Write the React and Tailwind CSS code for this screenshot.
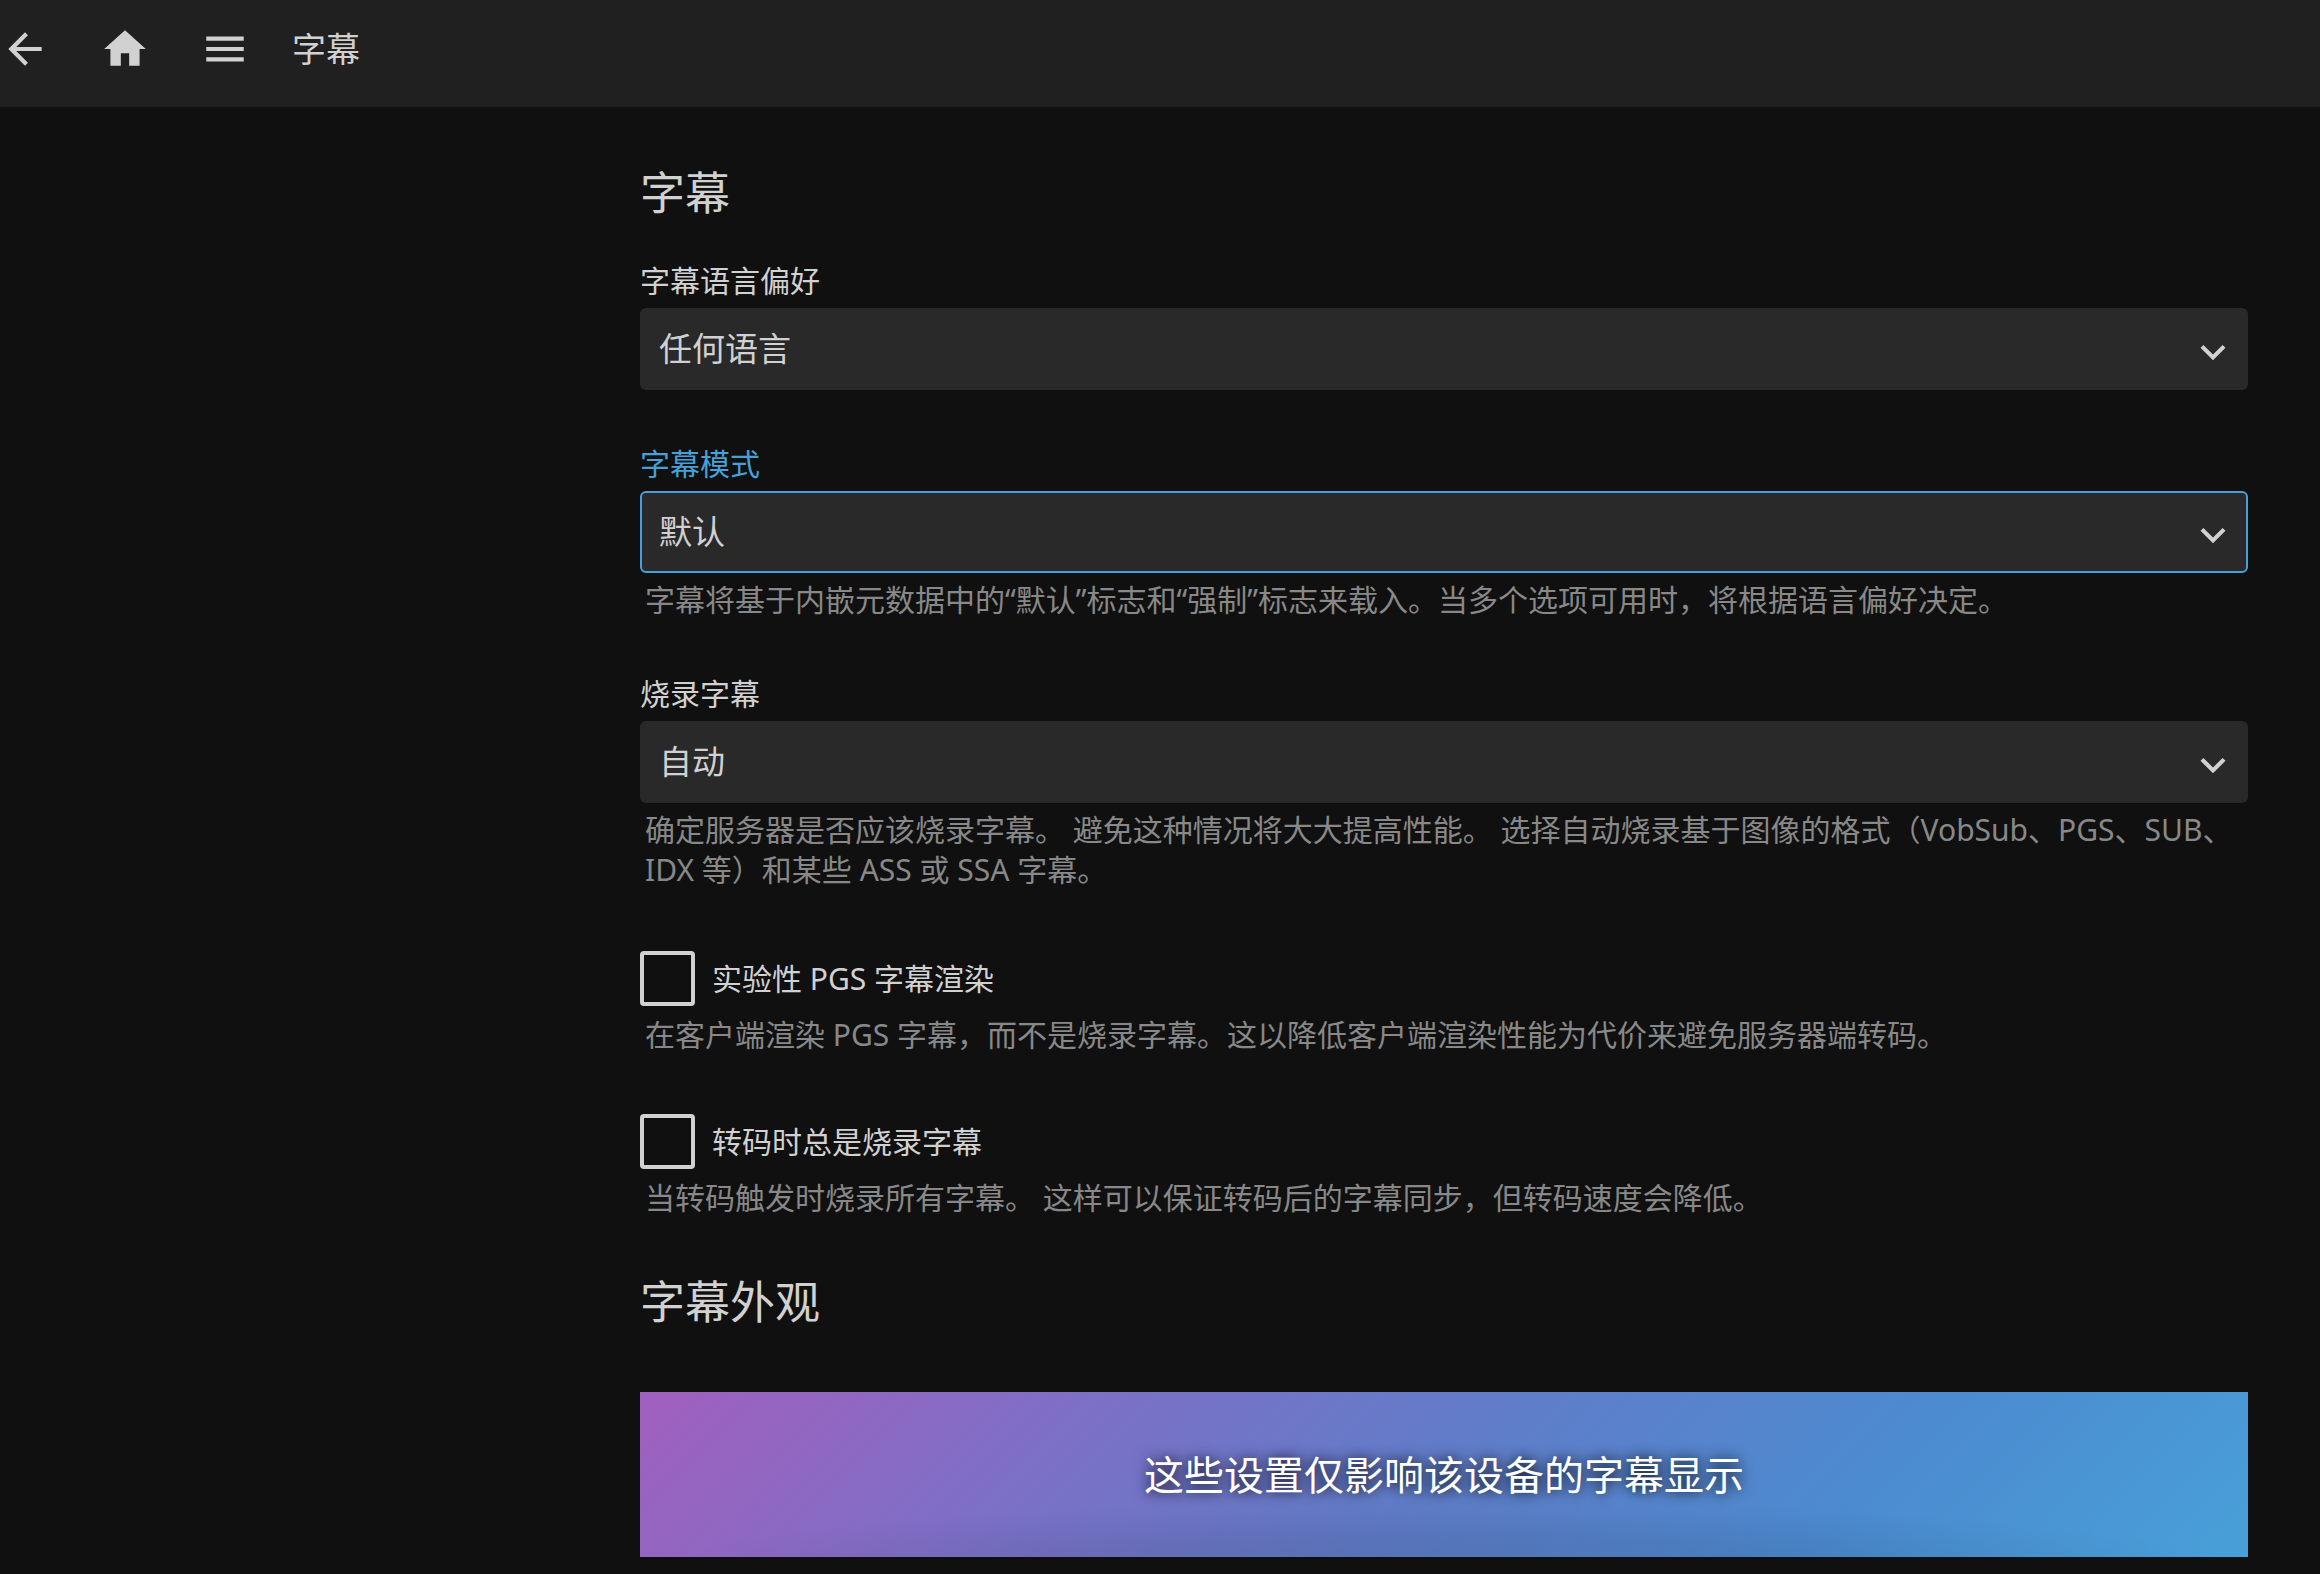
import { MdArrowBack, MdExpandMore, MdHome, MdMenu } from 'react-icons/md';

function IconButton({ label, children }) {
  return (
    <button type="button" aria-label={label} className="flex size-[50px] items-center justify-center text-[50px]">
      {children}
    </button>
  );
}

function SectionTitle({ children }) {
  return <h2 className="text-[45px] leading-[64px]">{children}</h2>;
}

function Description({ id, children }) {
  return (
    <p id={id} className="px-[5px] text-[30px] leading-[40px] text-[#888888]">
      {children}
    </p>
  );
}

function SelectField({ id, label, value, focused, description }) {
  return (
    <div className="mb-[54px]">
      <label htmlFor={id} className={`mb-[7px] block text-[30px] leading-[40px] ${focused ? 'text-[#46a0d9]' : ''}`}>
        {label}
      </label>
      <div className="relative">
        <select
          id={id}
          aria-describedby={description ? `${id}-desc` : undefined}
          className={`block h-[82px] w-full appearance-none rounded-[6px] border-2 bg-[#292929] pr-[70px] pl-[17px] text-[33px] outline-none ${focused ? 'border-[#46a0d9]' : 'border-[#292929]'}`}
        >
          <option>{value}</option>
        </select>
        <MdExpandMore className="pointer-events-none absolute top-[19px] right-[10px] text-[50px]" />
      </div>
      {description && (
        <div className="mt-[7px]">
          <Description id={`${id}-desc`}>{description}</Description>
        </div>
      )}
    </div>
  );
}

function CheckboxField({ id, label, description }) {
  return (
    <div className="mb-[59px]">
      <div className="mb-[9px] flex items-center">
        <input
          id={id}
          type="checkbox"
          aria-describedby={`${id}-desc`}
          className="size-[55px] shrink-0 appearance-none rounded-[4px] border-4 border-[#d1d1d1] checked:bg-[#46a0d9]"
        />
        <label htmlFor={id} className="pl-[17px] text-[30px] leading-[40px]">
          {label}
        </label>
      </div>
      <Description id={`${id}-desc`}>{description}</Description>
    </div>
  );
}

export default function App() {
  return (
    <div className="min-h-screen bg-[#101010] font-['Noto_Sans','Noto_Sans_CJK_SC',sans-serif] text-[#d1d1d1]" lang="zh-CN">
      <header className="flex h-[107px] items-center gap-[50px] bg-[#202020] pb-[9px]">
        <IconButton label="返回"><MdArrowBack /></IconButton>
        <IconButton label="首页"><MdHome /></IconButton>
        <IconButton label="菜单"><MdMenu /></IconButton>
        <h1 className="-ml-[8px] text-[34px] leading-[48px]">字幕</h1>
      </header>

      <main className="ml-[568px] px-[72px] pt-[54px]">
        <form>
          <section>
            <div className="mb-[36px]">
              <SectionTitle>字幕</SectionTitle>
            </div>
            <SelectField id="language" label="字幕语言偏好" value="任何语言" />
            <SelectField
              id="mode"
              label="字幕模式"
              value="默认"
              focused
              description="字幕将基于内嵌元数据中的“默认”标志和“强制”标志来载入。当多个选项可用时，将根据语言偏好决定。"
            />
            <SelectField
              id="burn"
              label="烧录字幕"
              value="自动"
              description="确定服务器是否应该烧录字幕。 避免这种情况将大大提高性能。 选择自动烧录基于图像的格式（VobSub、PGS、SUB、IDX 等）和某些 ASS 或 SSA 字幕。"
            />
            <div className="pt-[7px]">
              <CheckboxField
                id="pgs"
                label="实验性 PGS 字幕渲染"
                description="在客户端渲染 PGS 字幕，而不是烧录字幕。这以降低客户端渲染性能为代价来避免服务器端转码。"
              />
              <CheckboxField
                id="transcode"
                label="转码时总是烧录字幕"
                description="当转码触发时烧录所有字幕。 这样可以保证转码后的字幕同步，但转码速度会降低。"
              />
            </div>
          </section>

          <section className="-mt-[7px]">
            <SectionTitle>字幕外观</SectionTitle>
            <div className="mt-[58px] flex h-[165px] items-center justify-center bg-[radial-gradient(ellipse_50%_45%_at_50%_110%,#0000001a,#00000014_50%,transparent),linear-gradient(135deg,#a15fbe,#7e6fc6_25%,#607dc9_50%,#4c8bd0_75%,#48a0d8)] text-[40px] text-white [text-shadow:0_0_14px_#000000]">
              这些设置仅影响该设备的字幕显示
            </div>
          </section>
        </form>
      </main>
    </div>
  );
}
